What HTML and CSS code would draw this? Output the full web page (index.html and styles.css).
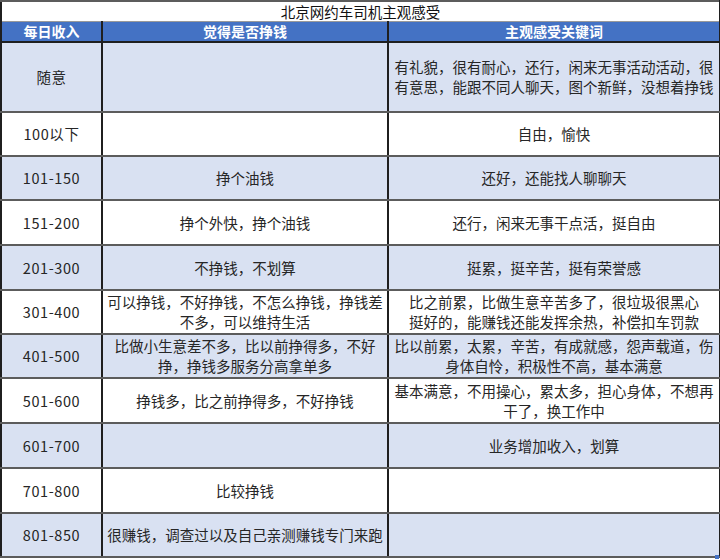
FILE: index.html
```html
<!DOCTYPE html>
<html lang="zh-CN">
<head>
<meta charset="utf-8">
<title>北京网约车司机主观感受</title>
<link rel="stylesheet" href="styles.css">
</head>
<body>
<div class="sheet">
<table class="grid">
  <colgroup>
    <col class="c1"><col class="c2"><col class="c3">
  </colgroup>
  <tr class="title"><td colspan="3">北京网约车司机主观感受</td></tr>
  <tr class="head"><th>每日收入</th><th>觉得是否挣钱</th><th>主观感受关键词</th></tr>
  <tr class="alt tall"><td class="num">随意</td><td></td><td>有礼貌，很有耐心，还行，闲来无事活动活动，很有意思，能跟不同人聊天，图个新鲜，没想着挣钱</td></tr>
  <tr class="r44"><td class="num">100以下</td><td></td><td>自由，愉快</td></tr>
  <tr class="alt r44"><td class="num">101-150</td><td>挣个油钱</td><td>还好，还能找人聊聊天</td></tr>
  <tr class="r45"><td class="num">151-200</td><td>挣个外快，挣个油钱</td><td>还行，闲来无事干点活，挺自由</td></tr>
  <tr class="alt r45"><td class="num">201-300</td><td>不挣钱，不划算</td><td>挺累，挺辛苦，挺有荣誉感</td></tr>
  <tr class="r44"><td class="num">301-400</td><td>可以挣钱，不好挣钱，不怎么挣钱，挣钱差不多，可以维持生活</td><td>比之前累，比做生意辛苦多了，很垃圾很黑心<br>挺好的，能赚钱还能发挥余热，补偿扣车罚款</td></tr>
  <tr class="alt r44"><td class="num">401-500</td><td>比做小生意差不多，比以前挣得多，不好挣，挣钱多服务分高拿单多</td><td>比以前累，太累，辛苦，有成就感，怨声载道，伤身体自怜，积极性不高，基本满意</td></tr>
  <tr class="r45"><td class="num">501-600</td><td>挣钱多，比之前挣得多，不好挣钱</td><td>基本满意，不用操心，累太多，担心身体，不想再干了，换工作中</td></tr>
  <tr class="alt r45"><td class="num">601-700</td><td></td><td>业务增加收入，划算</td></tr>
  <tr class="r45"><td class="num">701-800</td><td>比较挣钱</td><td></td></tr>
  <tr class="alt r44"><td class="num">801-850</td><td>很赚钱，调查过以及自己亲测赚钱专门来跑</td><td></td></tr>
</table>
<span class="handle"></span>
</div>
</body>
</html>
```

FILE: styles.css
```css
html, body {
  margin: 0;
  padding: 0;
  background: #ffffff;
}
.sheet {
  position: relative;
  width: 720px;
  height: 560px;
  overflow: hidden;
}
.grid {
  border-collapse: collapse;
  table-layout: fixed;
  width: 719px;
  font-family: "Noto Sans CJK SC", "Microsoft YaHei", sans-serif;
  font-size: 14.5px;
  line-height: 20px;
  color: #262626;
  border: 2px solid #1f1f1f;
}
.c1 { width: 101px; }
.c2 { width: 286px; }
.c3 { width: 332px; }
.grid td, .grid th {
  padding: 0 3px;
  text-align: center;
  vertical-align: middle;
  border-left: 2px solid #1f1f1f;
  border-right: 2px solid #1f1f1f;
  border-top: 2px solid #5c5c5c;
  border-bottom: 2px solid #5c5c5c;
  overflow: hidden;
}
.grid td.num {
  letter-spacing: 0.6px;
}
.title td {
  height: 19px;
  font-size: 14.5px;
  color: #111;
  border-bottom: 1px solid #9a9a9a;
  line-height: 19px;
}
.head th {
  height: 19px;
  background: #4472c4;
  color: #ffffff;
  font-weight: bold;
  font-size: 14px;
  line-height: 19px;
  border-top: 1px solid #9a9a9a;
  border-bottom: 2px solid #1f1f1f;
}
.alt td { background: #d9e1f2; }
.tall td { height: 68px; }
.r44 td { height: 42px; }
.r45 td { height: 43px; }
.handle {
  position: absolute;
  left: 715px;
  top: 555px;
  width: 4px;
  height: 4px;
  background: #4472c4;
}
```
